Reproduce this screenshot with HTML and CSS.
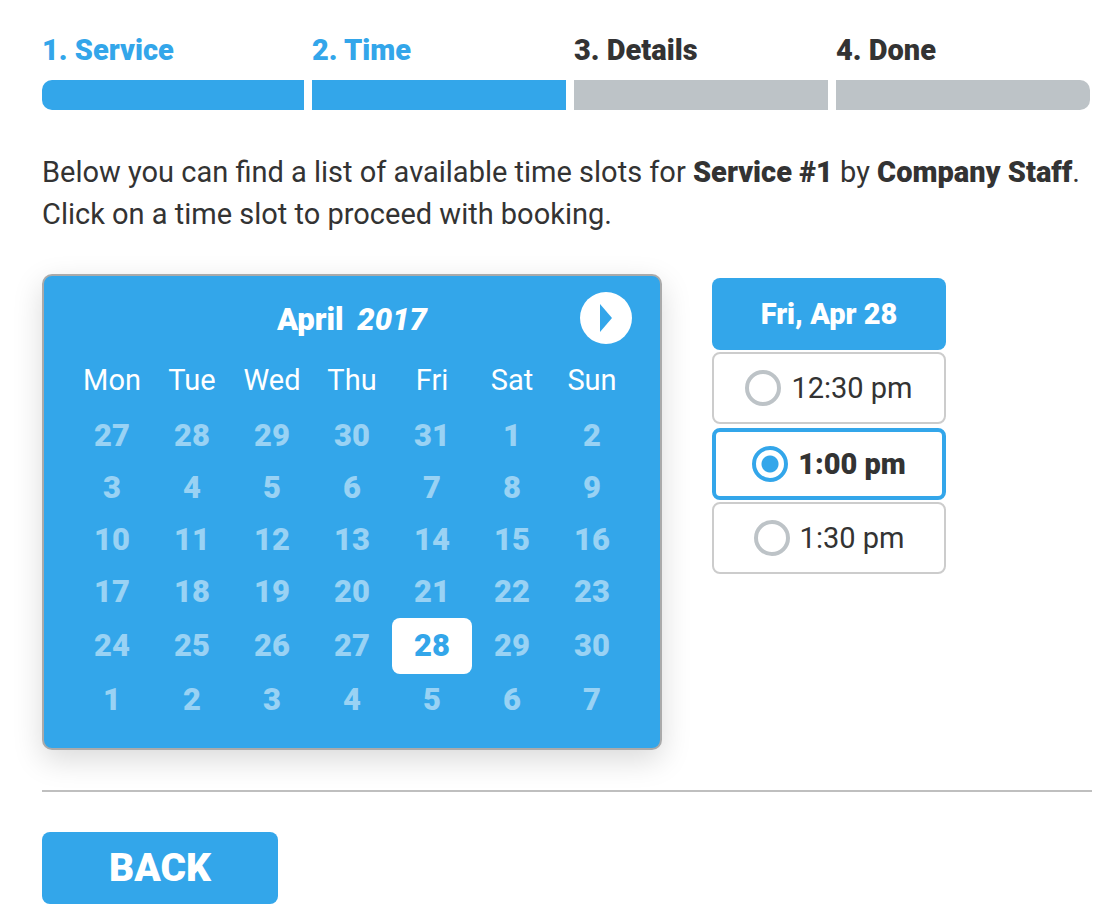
FILE: index.html
```html
<!DOCTYPE html>
<html lang="en">
<head>
    <meta charset="UTF-8">
    <meta name="viewport" content="width=device-width, initial-scale=1.0">
    <title>Booking - Time</title>
    <link rel="stylesheet" href="styles.css">
</head>
<body>
    <main class="booking">
        <ol class="steps">
            <li class="step done">1. Service</li>
            <li class="step done">2. Time</li>
            <li class="step">3. Details</li>
            <li class="step">4. Done</li>
        </ol>

        <p class="intro">Below you can find a list of available time slots for <b>Service #1</b> by <b>Company Staff</b>.<br>Click on a time slot to proceed with booking.</p>

        <form class="picker">
            <section class="calendar">
                <div class="calendar-header">
                    <h2 class="calendar-title">April <em>2017</em></h2>
                    <button type="button" class="next-btn" aria-label="Next month">
                        <svg width="12" height="28" viewBox="0 0 12 28"><path d="M0 0L12 14L0 28Z"/></svg>
                    </button>
                </div>
                <table class="days">
                    <thead>
                        <tr><th>Mon</th><th>Tue</th><th>Wed</th><th>Thu</th><th>Fri</th><th>Sat</th><th>Sun</th></tr>
                    </thead>
                    <tbody>
                        <tr><td>27</td><td>28</td><td>29</td><td>30</td><td>31</td><td>1</td><td>2</td></tr>
                        <tr><td>3</td><td>4</td><td>5</td><td>6</td><td>7</td><td>8</td><td>9</td></tr>
                        <tr><td>10</td><td>11</td><td>12</td><td>13</td><td>14</td><td>15</td><td>16</td></tr>
                        <tr><td>17</td><td>18</td><td>19</td><td>20</td><td>21</td><td>22</td><td>23</td></tr>
                        <tr><td>24</td><td>25</td><td>26</td><td>27</td><td><button type="button" class="day-btn">28</button></td><td>29</td><td>30</td></tr>
                        <tr><td>1</td><td>2</td><td>3</td><td>4</td><td>5</td><td>6</td><td>7</td></tr>
                    </tbody>
                </table>
            </section>

            <section class="slots">
                <h3 class="slots-title">Fri, Apr 28</h3>
                <label class="slot"><input type="radio" name="slot" value="12:30">12:30 pm</label>
                <label class="slot"><input type="radio" name="slot" value="13:00" checked>1:00 pm</label>
                <label class="slot"><input type="radio" name="slot" value="13:30">1:30 pm</label>
            </section>
        </form>

        <div class="footer">
            <button type="button" class="back-btn">BACK</button>
        </div>
    </main>
</body>
</html>
```
FILE: styles.css
```css
:root {
    --blue: #33a6ea;
    --gray: #bdc3c7;
    --text: #333333;
    --white: #ffffff;
}

* {
    margin: 0;
    padding: 0;
    box-sizing: border-box;
}

body {
    font-family: Roboto, "Liberation Sans", sans-serif;
    font-size: 29px;
    line-height: 42px;
    color: var(--text);
    background: var(--white);
}

button,
input {
    font: inherit;
}

button {
    border: none;
    cursor: pointer;
}

.booking {
    padding: 29px 18px 20px 42px;
}

/* progress */
.steps {
    display: flex;
    list-style: none;
    margin-right: 2px;
}

.step {
    width: 25%;
    font-weight: 900;
}

.step::after {
    content: "";
    display: block;
    height: 30px;
    margin-top: 9px;
    background: var(--gray);
}

.step + .step {
    padding-left: 8px;
}

.step:first-child::after {
    border-radius: 10px 0 0 10px;
}

.step:last-child::after {
    border-radius: 0 10px 10px 0;
}

.step.done {
    color: var(--blue);
}

.step.done::after {
    background: var(--blue);
}

.intro {
    margin: 41px 0 39px;
}

.intro b {
    font-weight: 900;
}

.picker {
    display: flex;
    align-items: flex-start;
    gap: 50px;
}

/* calendar */
.calendar {
    padding: 16px 28px 22px;
    color: var(--white);
    background: var(--blue);
    border: 2px solid #aaaaaa;
    border-radius: 10px;
    box-shadow: 0 10px 30px rgba(0, 0, 0, 0.15);
}

.calendar-header {
    display: grid;
    grid-template-columns: 52px 1fr 52px;
    align-items: center;
    margin-bottom: 6px;
}

.calendar-title {
    grid-column: 2;
    padding-top: 4px;
    font-size: 31px;
    font-weight: 900;
    text-align: center;
}

.calendar-title em {
    margin-left: 6px;
}

.next-btn {
    display: flex;
    align-items: center;
    justify-content: center;
    width: 52px;
    height: 52px;
    border-radius: 50%;
    background: var(--white);
}

.next-btn svg {
    fill: var(--blue);
}

.days {
    border-collapse: collapse;
    table-layout: fixed;
}

.days th {
    width: 80px;
    height: 60px;
    font-weight: 400;
}

.days td {
    height: 52px;
    font-size: 31px;
    font-weight: 900;
    text-align: center;
    color: rgba(255, 255, 255, 0.5);
}

.day-btn {
    display: block;
    width: 100%;
    height: 56px;
    border-radius: 8px;
    color: var(--blue);
    background: var(--white);
}

/* time slots */
.slots {
    display: flex;
    flex-direction: column;
    gap: 2px;
    width: 234px;
    padding-top: 4px;
}

.slots-title {
    height: 72px;
    border-radius: 8px;
    font-size: 29px;
    font-weight: 900;
    line-height: 72px;
    text-align: center;
    color: var(--white);
    background: var(--blue);
}

.slot {
    display: flex;
    align-items: center;
    justify-content: center;
    gap: 10px;
    height: 72px;
    border: 2px solid #cccccc;
    border-radius: 8px;
    cursor: pointer;
}

.slot:has(:checked) {
    margin-top: 2px;
    border: 4px solid var(--blue);
    font-weight: 900;
}

.slot input {
    appearance: none;
    width: 36px;
    height: 36px;
    border: 4px solid var(--gray);
    border-radius: 50%;
}

.slot input:checked {
    border-color: var(--blue);
    background: radial-gradient(circle, var(--blue) 8px, var(--white) 9px);
}

.footer {
    margin-top: 40px;
    padding-top: 40px;
    border-top: 2px solid #bfbfbf;
}

.back-btn {
    display: block;
    width: 236px;
    height: 72px;
    border-radius: 8px;
    font-size: 39px;
    font-weight: 900;
    color: var(--white);
    background: var(--blue);
}
```
